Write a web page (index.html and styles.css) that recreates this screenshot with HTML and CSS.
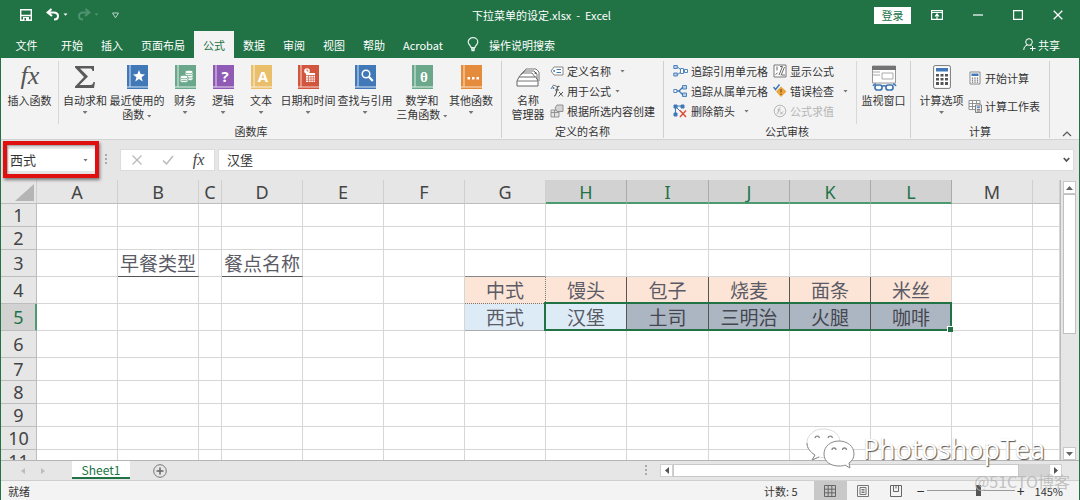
FILE: index.html
```html
<!DOCTYPE html>
<html lang="zh-CN">
<head>
<meta charset="utf-8">
<title>下拉菜单的设定.xlsx - Excel</title>
<link rel="stylesheet" href="styles.css">
</head>
<body>
<div class="window">
  <header class="titlebar">
    <div class="quick">
      <button class="tool" aria-label="保存"><svg width="12" height="12" viewBox="0 0 12 12"><path d="M.7.7h10.6v10.6H.7zM.7 6.5h10.6" fill="none" stroke="#fff" stroke-width="1.4"/><path d="M3 8h6v3.500H3z" fill="#fff"/><path d="M4.500 9h1.500v2.500H4.500z" fill="#217346"/></svg></button>
      <button class="tool undo" aria-label="撤消"><svg width="22" height="14" viewBox="0 0 22 14"><path d="M5.500 1 1.500 4.500l4.500 3.500M2 4.500h5.500c3 0 4.500 1.500 4.500 3.500s-1.500 3.500-4 3.500" fill="none" stroke="#fff" stroke-width="2"/><path d="M17.500 5.500h4l-2 2.300z" fill="#fff"/></svg></button>
      <button class="tool redo" aria-label="恢复"><svg width="22" height="14" viewBox="0 0 22 14"><path d="M8.500 1l4 3.500L8 8M12 4.500H6.500c-3 0-4.500 1.500-4.500 3.500s1.500 3.500 4 3.500" fill="none" stroke="#4f9270" stroke-width="2"/><path d="M17.500 5.500h4l-2 2.300z" fill="#4f9270"/></svg></button>
      <button class="tool" aria-label="自定义快速访问工具栏"><svg width="7" height="7" viewBox="0 0 7 7"><path d="M.5 1h6L3.500 5.800z" fill="none" stroke="#b9d5c6"/></svg></button>
    </div>
    <h1 class="doc-title">下拉菜单的设定.xlsx&nbsp; -&nbsp; Excel</h1>
    <div class="win-controls">
      <button class="login">登录</button>
      <button class="tool" aria-label="功能区显示选项"><svg width="12" height="10" viewBox="0 0 12 10"><path d="M.6.6h10.800v8.800H.6zM.6 2.500h10.800" fill="none" stroke="#fff" stroke-width="1.200"/><path d="M4 6.500l2-2.500 2 2.500M6 4.500V9" fill="none" stroke="#fff" stroke-width="1.200"/></svg></button>
      <button class="tool" aria-label="最小化"><svg width="10" height="10" viewBox="0 0 10 10"><path d="M0 5h10" stroke="#fff" stroke-width="1.200"/></svg></button>
      <button class="tool" aria-label="最大化"><svg width="10" height="10" viewBox="0 0 10 10"><path d="M.6.6h8.800v8.800H.6z" fill="none" stroke="#fff" stroke-width="1.200"/></svg></button>
      <button class="tool" aria-label="关闭"><svg width="10" height="10" viewBox="0 0 10 10"><path d="M.7.7l8.600 8.600M9.300.7.7 9.300" stroke="#fff" stroke-width="1.300"/></svg></button>
    </div>
  </header>

  <nav class="tabs">
    <button class="tab file">文件</button>
    <button class="tab">开始</button>
    <button class="tab">插入</button>
    <button class="tab">页面布局</button>
    <button class="tab active">公式</button>
    <button class="tab">数据</button>
    <button class="tab">审阅</button>
    <button class="tab">视图</button>
    <button class="tab">帮助</button>
    <button class="tab">Acrobat</button>
    <button class="tab tell"><svg width="12" height="15" viewBox="0 0 12 15"><path d="M4 10.500C4 8.500 1.200 7.800 1.200 5a4.800 4.300 0 0 1 9.600 0C10.800 7.800 8 8.500 8 10.500z" fill="none" stroke="#e4f0ea" stroke-width="1.200"/><path d="M4 12h4M4.500 13.700h3" stroke="#fff" stroke-width="1.300"/></svg>操作说明搜索</button>
    <button class="tab share"><svg width="13" height="13" viewBox="0 0 13 13"><circle cx="6" cy="4" r="3.300" fill="none" stroke="#fff"/><path d="M.8 12c0-3 1.500-4.500 3.700-5M7.500 7l1 1M9.500 8v5M7 10.500h5.500" fill="none" stroke="#fff"/></svg>共享</button>
  </nav>

  <div class="ribbon">
    <section class="group library">
      <div class="big-row fn-grid">
        <button class="big split"><svg class="ico" width="28" height="24" viewBox="0 0 28 24"><text x="14" y="19" class="fx-big">fx</text></svg><span>插入函数</span></button>
        <button class="big"><svg class="ico" width="24" height="24" viewBox="0 0 24 24"><path d="M2 1h19v5h-1.500C19 4 18.500 3.500 16.500 3.500H7l8 8-8.500 8.500H17c2.500 0 3-1 3.500-3H22L21 23H2v-1.500l9-9.500L2 2.500z" fill="#5a5a5a"/></svg><span>自动求和</span><i class="caret"></i></button>
        <button class="big"><svg class="ico" width="22" height="24" viewBox="0 0 22 24"><path d="M1 0h21v24H1z" fill="#4179b8"/><path d="M4 0v22M1 22h21" stroke="#d5e3f2" stroke-width="1"/><path d="M13 5l1.600 4.100 4.400.3-3.400 2.800 1.100 4.300L13 14.100l-3.700 2.400 1.100-4.300L7 9.400l4.400-.3z" fill="#fff"/></svg><span>最近使用的<br>函数 <i class="caret inline"></i></span></button>
        <button class="big"><svg class="ico" width="22" height="24" viewBox="0 0 22 24"><path d="M1 0h21v24H1z" fill="#6ba88b"/><path d="M4 0v22M1 22h21" stroke="#e0eee7"/><g fill="#fff" stroke="#6ba88b" stroke-width=".8"><path d="M11 7v7c0 2 8 2 8 0V7z"/><ellipse cx="15" cy="7" rx="4" ry="1.800"/><path d="M11 9.500c1 1.500 7 1.500 8 0M11 12c1 1.500 7 1.500 8 0" fill="none"/><path d="M6 12v4c0 2 8 2 8 0v-4z"/><ellipse cx="10" cy="12" rx="4" ry="1.800"/><path d="M6 14.500c1 1.500 7 1.500 8 0" fill="none"/></g></svg><span>财务</span><i class="caret"></i></button>
        <button class="big"><svg class="ico" width="22" height="24" viewBox="0 0 22 24"><path d="M1 0h21v24H1z" fill="#8f5bb5"/><path d="M4 0v22M1 22h21" stroke="#e6dbef"/><text x="13" y="17" class="book-text">?</text></svg><span>逻辑</span><i class="caret"></i></button>
        <button class="big"><svg class="ico" width="22" height="24" viewBox="0 0 22 24"><path d="M1 0h21v24H1z" fill="#eabf6c"/><path d="M4 0v22M1 22h21" stroke="#fbf1dd"/><text x="13" y="17" class="book-text">A</text></svg><span>文本</span><i class="caret"></i></button>
        <button class="big"><svg class="ico" width="22" height="24" viewBox="0 0 22 24"><path d="M1 0h21v24H1z" fill="#d2553d"/><path d="M4 0v22M1 22h21" stroke="#f5d8d2"/><path d="M9 8h9v9H9z" fill="#fff"/><path d="M9 10.500h9M9 13h9M9 15.200h9M11.500 10v7M14 10v7M16.300 10v7" stroke="#d2553d" stroke-width=".7"/><circle cx="10" cy="6" r="2.800" fill="#fff"/><path d="M10 4.200V6h1.500" fill="none" stroke="#d2553d" stroke-width=".8"/></svg><span>日期和时间</span><i class="caret"></i></button>
        <button class="big"><svg class="ico" width="22" height="24" viewBox="0 0 22 24"><path d="M1 0h21v24H1z" fill="#4179b8"/><path d="M4 0v22M1 22h21" stroke="#d5e3f2"/><circle cx="12" cy="9" r="3.800" fill="none" stroke="#fff" stroke-width="1.500"/><path d="M14.800 11.800l4 4.200" stroke="#fff" stroke-width="2.200"/></svg><span>查找与引用</span><i class="caret"></i></button>
        <button class="big"><svg class="ico" width="22" height="24" viewBox="0 0 22 24"><path d="M1 0h21v24H1z" fill="#6ba88b"/><path d="M4 0v22M1 22h21" stroke="#e0eee7"/><text x="13" y="17" class="book-text serif">θ</text></svg><span>数学和<br>三角函数 <i class="caret inline"></i></span></button>
        <button class="big"><svg class="ico" width="22" height="24" viewBox="0 0 22 24"><path d="M1 0h21v24H1z" fill="#e58b3c"/><path d="M4 0v22M1 22h21" stroke="#fae3cf"/><path d="M7.500 12h2.500v2.500H7.500zM12 12h2.500v2.500H12zM16.500 12H19v2.500h-2.500z" fill="#fff"/></svg><span>其他函数</span><i class="caret"></i></button>
      </div>
      <h2 class="group-name">函数库</h2>
    </section>

    <section class="group names">
      <div class="big-row">
        <button class="big manager"><svg class="ico" width="26" height="24" viewBox="0 0 26 24"><path d="M8 8l3-4h10l3 3v9M6 10l3-4h10l3 3v8M4 12l3-4h10l3 4" fill="#fff" stroke="#666" stroke-width=".9"/><path d="M4 12h17l2 4v5H2v-5z" fill="#fff" stroke="#666"/><path d="M2 16h21" stroke="#777"/><circle cx="20.500" cy="8" r="1" fill="#555"/></svg><span>名称<br>管理器</span></button>
        <div class="small-col">
          <button class="small"><svg width="14" height="14" viewBox="0 0 14 14"><path d="M1 7l3-4h9v8H4z" fill="#fff" stroke="#7a7a7a" stroke-width=".9"/><circle cx="4.200" cy="7" r="1" fill="#4179b8"/><path d="M6.500 5.500H11M6.500 8.500H11" stroke="#4179b8" stroke-width="1.100"/></svg>定义名称<i class="caret far"></i></button>
          <button class="small"><svg width="14" height="14" viewBox="0 0 14 14"><path d="M1 5l2.500-4 4.500 2" fill="#fff" stroke="#777"/><circle cx="3.500" cy="4" r="1" fill="#4179b8"/><path d="M9.500 2.500c-2-.8-2.200 1-2.600 3.500S6.200 12 4 12M5 6h4" fill="none" stroke="#555" stroke-width="1.200"/><path d="M9 8l4 4.500M13 8l-4.500 4.500" stroke="#555"/></svg>用于公式<i class="caret near"></i></button>
          <button class="small"><svg width="14" height="14" viewBox="0 0 14 14"><path d="M1 6h8v7H1zM1 8.500h8M4.500 6v7" fill="#e3e3e3" stroke="#8b8b8b" stroke-width=".9"/><path d="M5 4l2-3h6v6.500H7z" fill="#d4d4d4" stroke="#888" stroke-width=".9"/></svg>根据所选内容创建</button>
        </div>
      </div>
      <h2 class="group-name">定义的名称</h2>
    </section>

    <section class="group audit">
      <div class="big-row">
        <div class="small-col trace">
          <button class="small"><svg width="15" height="14" viewBox="0 0 15 14"><path d="M.8 1.500h3.500v3H.8zM.8 9h3.500v3H.8z" fill="#b9cfe8" stroke="#4179b8" stroke-width=".9"/><path d="M4.500 3l3.500 3M4.500 10.500L8 8" stroke="#4179b8"/><path d="M7.500 4.500h3v5h-3zM11.500 5.500h3v3h-3z" fill="#fff" stroke="#4179b8" stroke-width=".9"/></svg>追踪引用单元格</button>
          <button class="small"><svg width="15" height="14" viewBox="0 0 15 14"><path d="M.8 5.500h3v3h-3z" fill="#fff" stroke="#4179b8" stroke-width=".9"/><path d="M9.500 1.500h4v3.500h-4zM9.500 9h4v3.500h-4z" fill="#b9cfe8" stroke="#4179b8" stroke-width=".9"/><path d="M4 7h2M6 7l4-4M6 7l4 4" stroke="#4179b8" stroke-width="1.300"/></svg>追踪从属单元格</button>
          <button class="small"><svg width="15" height="14" viewBox="0 0 15 14"><path d="M1 1h3v3H1zM8 1h3v3H8zM1 9h3v3H1zM3 2h6M2.500 3v7M3 3l5 5" fill="#4179b8" stroke="#4179b8"/><path d="M7 6.500l6 6.500M13 6.500L7 13" stroke="#dc4f36" stroke-width="1.500"/></svg>删除箭头<i class="caret far"></i></button>
        </div>
        <div class="small-col checks">
          <button class="small"><svg width="14" height="14" viewBox="0 0 14 14"><path d="M1 1h12v12H1z" fill="#fff" stroke="#777"/><path d="M4 2.500v4M2.500 10.500l2-1.500M7 2.500h2.500L6 11M11.500 3L8 11.500M9 11h3" fill="none" stroke="#555" stroke-width=".9"/></svg>显示公式</button>
          <button class="small"><svg width="14" height="14" viewBox="0 0 14 14"><path d="M8 2.500l5.500 5L8 13 3 7.500z" fill="#eaa540"/><path d="M8 5v3.500M8 9.800V11" stroke="#7a5418" stroke-width="1.200"/><path d="M.5 3l2 2.500 4-5" fill="none" stroke="#4179b8" stroke-width="1.500"/></svg>错误检查<i class="caret far"></i></button>
          <button class="small" disabled><svg width="14" height="14" viewBox="0 0 14 14"><circle cx="7" cy="7" r="5.800" fill="none" stroke="#b5b5b5"/><path d="M7.500 3.500c-1.500 0-1.500 2-2 3.500s-.5 3-2 3M4.500 6h3M7 7.500l3 3M10 7.500l-3 3" fill="none" stroke="#aaa" stroke-width=".9"/></svg>公式求值</button>
        </div>
        <button class="big watch"><svg class="ico" width="26" height="26" viewBox="0 0 26 26"><path d="M1.500 1h23v17h-23z" fill="#fff" stroke="#999"/><path d="M1 1h24v4H1z" fill="#737373"/><path d="M2 7h7M2 10h7M11 8h11v6H11z" fill="none" stroke="#aaa"/><path d="M2 21c1-2 2-2 3-2M25 21c-1-2-2-2-3-2" fill="none" stroke="#3f76b4" stroke-width="1.500"/><rect x="4" y="20" width="7" height="5" rx="2.300" fill="#fff" stroke="#3f76b4" stroke-width="1.700"/><rect x="15" y="20" width="7" height="5" rx="2.300" fill="#fff" stroke="#3f76b4" stroke-width="1.700"/><path d="M11 21.500c1-1 3-1 4 0" fill="none" stroke="#3f76b4" stroke-width="1.500"/></svg><span>监视窗口</span></button>
      </div>
      <h2 class="group-name">公式审核</h2>
    </section>

    <section class="group calc">
      <div class="big-row">
        <button class="big options"><svg class="ico" width="18" height="24" viewBox="0 0 18 24"><rect x=".6" y=".6" width="16.800" height="22.800" rx="1.500" fill="#fff" stroke="#777"/><path d="M3 3h12v3.500H3z" fill="#4179b8"/><path d="M3 9h3v2.500H3zM7.500 9h3v2.500h-3zM12 9h3v2.500h-3zM3 13h3v2.500H3zM7.500 13h3v2.500h-3zM12 13h3v2.500h-3zM3 17h3v3H3zM7.500 17h3v3h-3zM12 17h3v3h-3z" fill="#555"/></svg><span>计算选项</span><i class="caret"></i></button>
        <div class="small-col run">
          <button class="small"><svg width="14" height="14" viewBox="0 0 14 14"><path d="M2 1h10v12H2z" fill="#fff" stroke="#888"/><path d="M3.500 2.500h7V5h-7z" fill="#4179b8"/><path d="M4.500 6.500v5.500M7 6.500v5.500M9.500 6.500v5.500" stroke="#666" stroke-width="1.300" stroke-dasharray="1.300 .7"/></svg>开始计算</button>
          <button class="small"><svg width="14" height="14" viewBox="0 0 14 14"><path d="M1 1.500h11v9H1zM1 4.500h11M1 7.500h6M4.500 1.500v9M8.500 1.500v3" fill="#fff" stroke="#888" stroke-width=".9"/><path d="M7.500 6h6v7.500h-6z" fill="#e4e4e4" stroke="#777" stroke-width=".9"/><path d="M9 7.500h3v1.300H9z" fill="#4179b8"/><path d="M9 10.500h3M9 12h3" stroke="#666" stroke-width=".8"/></svg>计算工作表</button>
        </div>
      </div>
      <h2 class="group-name">计算</h2>
    </section>
    <button class="collapse" aria-label="折叠功能区"><svg width="10" height="6" viewBox="0 0 10 6"><path d="M1 5l4-4 4 4" fill="none" stroke="#555" stroke-width="1.200"/></svg></button>
  </div>

  <div class="formula-bar">
    <div class="name-box"><input aria-label="名称框" value="西式"><button aria-label="名称列表"><i class="caret"></i></button></div>
    <svg class="grip" width="3" height="12" viewBox="0 0 3 12"><path d="M0 0h2v2H0zM0 4h2v2H0zM0 8h2v2H0z" fill="#aaa"/></svg>
    <div class="edit-tools">
      <button aria-label="取消"><svg width="12" height="12" viewBox="0 0 12 12"><path d="M1.500 1.500l9 9M10.500 1.500l-9 9" stroke="#b9b9b9" stroke-width="1.300"/></svg></button>
      <button aria-label="输入"><svg width="12" height="12" viewBox="0 0 12 12"><path d="M1 6.500L4.500 10 11 2" fill="none" stroke="#b9b9b9" stroke-width="1.500"/></svg></button>
      <button aria-label="插入函数" class="fx">fx</button>
    </div>
    <div class="formula"><input aria-label="编辑栏" value="汉堡"><button aria-label="展开编辑栏"><svg width="7" height="6" viewBox="0 0 7 6"><path d="M.8 1l2.700 3L6.200 1" fill="none" stroke="#555" stroke-width="1.800"/></svg></button></div>
  </div>

  <main class="sheet">
    <div class="grid">
      <table>
        <colgroup><col class="c-head"><col class="c"><col class="c"><col class="c-thin"><col class="c"><col class="c"><col class="c"><col class="c"><col class="c"><col class="c-wide"><col class="c"><col class="c"><col class="c"><col class="c"><col></colgroup>
        <thead><tr><th class="corner"><svg width="19" height="17" viewBox="0 0 19 17"><path d="M19 0v17H0z" fill="#b5b5b5"/></svg></th><th>A</th><th>B</th><th>C</th><th>D</th><th>E</th><th>F</th><th>G</th><th class="on">H</th><th class="on">I</th><th class="on">J</th><th class="on">K</th><th class="on">L</th><th>M</th><th></th></tr></thead>
        <tbody>
          <tr><th>1</th><td></td><td></td><td></td><td></td><td></td><td></td><td></td><td></td><td></td><td></td><td></td><td></td><td></td><td></td></tr>
          <tr><th>2</th><td></td><td></td><td></td><td></td><td></td><td></td><td></td><td></td><td></td><td></td><td></td><td></td><td></td><td></td></tr>
          <tr class="tall"><th>3</th><td></td><td class="ruled">早餐类型</td><td></td><td class="ruled">餐点名称</td><td></td><td></td><td class="pre"></td><td></td><td></td><td></td><td></td><td></td><td></td><td></td></tr>
          <tr class="tall"><th>4</th><td></td><td></td><td></td><td></td><td></td><td></td><td class="peach dotted">中式</td><td class="peach bar">馒头</td><td class="peach bar">包子</td><td class="peach bar">烧麦</td><td class="peach bar">面条</td><td class="peach">米丝</td><td></td><td></td></tr>
          <tr class="tall"><th class="on">5</th><td></td><td></td><td></td><td></td><td></td><td></td><td class="blue">西式</td><td class="blue bar anchor">汉堡<span class="selection"></span></td><td class="picked bar">土司</td><td class="picked bar">三明治</td><td class="picked bar">火腿</td><td class="picked">咖啡</td><td></td><td></td></tr>
          <tr class="tall"><th>6</th><td></td><td></td><td></td><td></td><td></td><td></td><td></td><td></td><td></td><td></td><td></td><td></td><td></td><td></td></tr>
          <tr><th>7</th><td></td><td></td><td></td><td></td><td></td><td></td><td></td><td></td><td></td><td></td><td></td><td></td><td></td><td></td></tr>
          <tr><th>8</th><td></td><td></td><td></td><td></td><td></td><td></td><td></td><td></td><td></td><td></td><td></td><td></td><td></td><td></td></tr>
          <tr><th>9</th><td></td><td></td><td></td><td></td><td></td><td></td><td></td><td></td><td></td><td></td><td></td><td></td><td></td><td></td></tr>
          <tr><th>10</th><td></td><td></td><td></td><td></td><td></td><td></td><td></td><td></td><td></td><td></td><td></td><td></td><td></td><td></td></tr>
          <tr><th>11</th><td></td><td></td><td></td><td></td><td></td><td></td><td></td><td></td><td></td><td></td><td></td><td></td><td></td><td></td></tr>
        </tbody>
      </table>
    </div>
    <div class="vscroll">
      <button aria-label="向上滚动"><svg width="7" height="4" viewBox="0 0 7 4"><path d="M0 4h7L3.500 0z" fill="#666"/></svg></button>
      <div class="v-thumb"></div>
      <button class="down" aria-label="向下滚动"><svg width="7" height="4" viewBox="0 0 7 4"><path d="M0 0h7L3.500 4z" fill="#666"/></svg></button>
    </div>
  </main>

  <div class="sheet-bar">
    <div class="sheet-nav"><svg width="4" height="6" viewBox="0 0 4 6"><path d="M4 0v6L0 3z" fill="#bdbdbd"/></svg><svg width="4" height="6" viewBox="0 0 4 6"><path d="M0 0v6l4-3z" fill="#bdbdbd"/></svg></div>
    <button class="sheet-tab">Sheet1</button>
    <button class="add-sheet" aria-label="新工作表"><svg width="14" height="14" viewBox="0 0 14 14"><circle cx="7" cy="7" r="6.300" fill="none" stroke="#777"/><path d="M7 3.500v7M3.500 7h7" stroke="#666" stroke-width="1.500"/></svg></button>
    <svg class="grip bar-grip" width="3" height="12" viewBox="0 0 3 12"><path d="M0 0h2v2H0zM0 4h2v2H0zM0 8h2v2H0z" fill="#aaa"/></svg>
    <div class="hscroll">
      <button aria-label="向左滚动"><svg width="4" height="7" viewBox="0 0 4 7"><path d="M4 0v7L0 3.500z" fill="#555"/></svg></button>
      <div class="h-thumb"></div>
      <button aria-label="向右滚动"><svg width="4" height="7" viewBox="0 0 4 7"><path d="M0 0v7l4-3.500z" fill="#555"/></svg></button>
    </div>
  </div>

  <footer class="status">
    <span>就绪</span>
    <span class="count">计数: 5</span>
    <button class="view active" aria-label="普通"><svg width="12" height="12" viewBox="0 0 12 12"><path d="M.5.5h11v11H.5zM.5 4.200h11M.5 7.800h11M4.200.5v11M7.800.5v11" fill="none" stroke="#666"/></svg></button>
    <button class="view" aria-label="页面布局"><svg width="12" height="12" viewBox="0 0 12 12"><path d="M.5.5h11v11H.5zM3 2.500h6v7H3zM4.500 4.500h3M4.500 6h3M4.500 7.500h3" fill="none" stroke="#777"/></svg></button>
    <button class="view" aria-label="分页预览"><svg width="12" height="12" viewBox="0 0 12 12"><path d="M.5.5h11v11H.5zM3.500.5v6h5v-6M6 .5v3" fill="none" stroke="#666"/></svg></button>
    <button class="zoom-btn minus" aria-label="缩小">−</button>
    <input class="zoom-slider" type="range" min="0" max="100" value="60" aria-label="显示比例">
    <button class="zoom-btn" aria-label="放大">+</button>
    <span class="percent">145%</span>
  </footer>

  <div class="brand">
    <svg width="50" height="41" viewBox="0 0 50 41"><g fill="#fff" stroke="#8a8a8a" stroke-width="1"><path d="M17 1C8 1 1 7 1 15c0 5 3 9 8 12l-3 5 7-3c12 3 21-4 21-14S26 1 17 1z" stroke="#dcdcdc"/><path d="M1 15c0 5 3 9 8 12l-3 5 7-3" fill="none"/><path d="M33 13c-8 0-15 5-15 13s7 12 15 12c2 0 4 0 6-1l5 3-1-5c3-2 5-5 5-9 0-8-7-13-15-13z"/></g><g fill="none" stroke="#888" stroke-width="1.300"><path d="M9 10a2.300 2.300 0 0 1 4.500 0M22 10a2.300 2.300 0 0 1 4.500 0M26 22a2 2 0 0 1 4 0M36.500 22a2 2 0 0 1 4 0"/></g></svg>
    <span>PhotoshopTea</span>
  </div>
  <div class="credit">@51CTO博客</div>
</div>
</body>
</html>
```
FILE: styles.css
```css
* { box-sizing: border-box; }
body {
  margin: 0;
  font-family: "Noto Sans CJK SC", "Noto Sans", sans-serif;
  font-size: 11px;
  line-height: 14px;
  color: #333;
}
button, input {
  margin: 0;
  padding: 0;
  border: 0;
  background: none;
  font: inherit;
  color: inherit;
}
button { white-space: nowrap; }
svg { display: block; flex: none; }
h1, h2 { margin: 0; font-size: 11px; font-weight: 400; }

.window {
  position: relative;
  display: flex;
  flex-direction: column;
  height: 100vh;
  overflow: hidden;
  border: solid #217346;
  border-width: 0 1px;
  background: #e6e6e6;
}

/* Title bar */
.titlebar {
  display: grid;
  grid-template-columns: 1fr auto 1fr;
  align-items: center;
  height: 30px;
  padding: 0 16px 0 19px;
  background: #217346;
  color: #fff;
}
.quick { display: flex; align-items: center; gap: 9px; }
.undo { margin-left: 5px; }
.quick .tool:last-child { margin-left: 4px; }
.doc-title { font-size: 11px; }
.win-controls { display: flex; align-items: center; justify-content: flex-end; gap: 30px; }
.login {
  width: 37px;
  height: 17px;
  margin-right: -10px;
  background: #fff;
  color: #217346;
}

/* Ribbon tabs */
.tabs { display: flex; height: 28px; padding-top: 1px; background: #217346; color: #fff; }
.tab { padding: 0 9px; }
.tab.file { width: 51px; padding: 0; }
.tab.active { background: #f3f3f3; color: #217346; }
.tell { display: flex; align-items: center; gap: 10px; margin-left: 6px; }
.share { display: flex; align-items: center; gap: 2px; margin-left: auto; padding-right: 19px; }

/* Ribbon */
.ribbon {
  display: flex;
  height: 82px;
  background: #f3f3f3;
  border-bottom: 1px solid #d2d2d2;
}
.group { display: flex; flex-direction: column; border-right: 1px solid #d0d0d0; margin: 3px 0 1px; }
.group-name { text-align: center; line-height: 14px; }
.big-row { display: flex; flex: 1; }
.fn-grid { display: grid; grid-template-columns: 58px 52px 52px 44px 32px 44px 50px 64px 50px 48px; }
.library { width: 501px; }
.names { width: 162px; }
.audit { width: 247px; }
.calc { width: 139px; }
.big {
  display: flex;
  flex-direction: column;
  align-items: center;
  gap: 4px;
  padding-top: 4px;
  line-height: 14px;
}
.big.split { border-right: 1px solid #d8d8d8; }
.caret {
  display: block;
  width: 5px;
  height: 3px;
  background: #777;
  clip-path: polygon(0 0, 100% 0, 50% 100%);
}
.caret.inline { display: inline-block; vertical-align: middle; }
.small-col { display: flex; flex: none; flex-direction: column; gap: 6px; padding-top: 3px; }
.small { display: flex; align-items: center; gap: 3px; height: 14px; }
.small:disabled { color: #b5b5b5; }
.caret.far { margin-left: 6px; }
.caret.near { margin-left: 1px; }
.manager { width: 48px; padding-left: 4px; }
.trace { padding-left: 9px; width: 109px; }
.watch { flex: 1; gap: 2px; margin-left: 8px; border-left: 1px solid #d8d8d8; }
.options { width: 57px; padding-left: 4px; }
.run { gap: 14px; padding-top: 10px; }
.collapse { margin: auto 7px 2px auto; }
.fx-big { font: italic 26px "Liberation Serif", serif; fill: #555; text-anchor: middle; }
.book-text { font: bold 15px "Open Sans", sans-serif; fill: #fff; text-anchor: middle; }
.book-text.serif { font-family: "Liberation Serif", serif; }

/* Formula bar */
.formula-bar { display: flex; align-items: center; height: 40px; padding: 0 5px 0 7px; font-size: 13px; }
.name-box {
  position: relative;
  display: flex;
  width: 87px;
  height: 22px;
  background: #fff;
}
.name-box::after {
  content: "";
  position: absolute;
  inset: -8px -4px -7px -5px;
  border: 4px solid #e01010;
  box-shadow: 1px 2px 3px #777, inset 1px 1px 2px #999;
  pointer-events: none;
}
.name-box input { flex: 1; min-width: 0; padding-left: 2px; }
.name-box button { padding: 0 7px; }
.grip { margin: 0 12px 0 10px; }
.edit-tools {
  display: flex;
  align-items: center;
  justify-content: space-around;
  width: 95px;
  height: 22px;
  margin-right: 3px;
  background: #fff;
  border: 1px solid #dcdcdc;
}
.fx { font: italic 16px "Liberation Serif", serif; color: #444; }
.formula { display: flex; flex: 1; height: 22px; background: #fff; border: 1px solid #dcdcdc; }
.formula input { flex: 1; min-width: 0; padding-left: 8px; }
.formula button { padding: 0 3px; }

/* Worksheet grid */
.sheet { display: flex; flex: 1; min-height: 0; }
.grid { flex: 1; overflow: hidden; background: #fff; border-right: 1px solid #bbb; }
.grid table { width: 100%; table-layout: fixed; border-collapse: separate; border-spacing: 0; }
.c-head { width: 36px; }
.c { width: 81px; }
.c-wide { width: 82px; }
.c-thin { width: 23px; }
.grid th, .grid td {
  padding: 0;
  border: solid #d6d6d6;
  border-width: 0 1px 1px 0;
  text-align: center;
  font-weight: 400;
  white-space: nowrap;
}
.grid th {
  background: #e6e6e6;
  border-color: #bdbdbd;
  font-family: "Noto Sans", sans-serif;
  font-size: 18px;
  line-height: 22px;
  color: #444;
}
.grid td { font-size: 19px; line-height: 20px; color: #5b5b66; }
.grid tr { height: 23px; }
.grid thead tr { height: 24px; }
.grid tr.tall { height: 27px; }
.grid thead th { border-right-color: #cfcfcf; }
.grid .corner { vertical-align: bottom; padding: 0 2px 2px 14px; }
.grid thead th.on { background: #d2d2d2; color: #217346; border-right-color: #aaa; border-bottom-color: #4c9a70; box-shadow: inset 0 -1px #4c9a70; }
.grid tbody th.on { background: #d2d2d2; color: #217346; border-right-color: #4c9a70; box-shadow: inset -1px 0 #4c9a70; }
.grid .ruled { border-bottom-color: #555; }
.grid .pre { border-bottom-color: #888; }
.grid .peach { background: #fce4d6; }
.grid .dotted { border-right: 1px dotted #777; border-bottom: 1px dotted #777; }
.grid .blue { background: #ddebf7; border-bottom-color: #aaa; }
.grid .picked { background: #acb5c2; color: #44474f; }
.grid .bar { border-right-color: #555; }
.grid .anchor { position: relative; }
.selection {
  position: absolute;
  top: -2px;
  left: -2px;
  width: calc(500% + 8px);
  height: 29px;
  border: 2px solid #217346;
  pointer-events: none;
}
.selection::after {
  content: "";
  position: absolute;
  right: -3px;
  bottom: -3px;
  width: 5px;
  height: 5px;
  background: #217346;
  border: solid #fff;
  border-width: 1px 0 0 1px;
}
.vscroll { display: flex; flex-direction: column; width: 18px; padding: 1px 3px 0 2px; }
.vscroll button { display: grid; place-items: center; height: 13px; background: #fff; border: 1px solid #c8c8c8; }
.v-thumb { height: 50%; background: #fff; border: 1px solid #c0c0c0; }
.down { margin-top: auto; }

/* Sheet tabs and horizontal scroll */
.sheet-bar { display: flex; align-items: center; height: 21px; border-top: 1px solid #b5b5b5; border-bottom: 1px solid #cfcfcf; }
.sheet-nav { display: flex; gap: 16px; padding-left: 20px; width: 71px; }
.sheet-tab {
  align-self: flex-start;
  width: 58px;
  height: 18px;
  background: #fff;
  border-bottom: 2px solid #217346;
  color: #217346;
  font-size: 12px;
  line-height: 15px;
}
.add-sheet { margin-left: 23px; }
.bar-grip { margin-left: auto; }
.hscroll { display: flex; flex: 0 1 402px; height: 13px; margin-right: 17px; background: #d4d4d4; }
.hscroll button { display: grid; place-items: center; width: 13px; background: #fff; border: 1px solid #d0d0d0; }
.h-thumb { width: 346px; margin-right: auto; background: #fff; border: 1px solid #c8c8c8; }

/* Status bar */
.status { display: flex; align-items: center; height: 19px; padding: 0 16px 0 7px; background: #f3f3f3; }
.count { margin-left: auto; margin-right: 16px; }
.view { display: grid; place-items: center; width: 33px; height: 19px; }
.view.active { background: #c8c8c8; }
.zoom-btn { width: 12px; font-size: 14px; }
.minus { margin-left: 2px; }
.zoom-slider { appearance: none; width: 88px; height: 12px; }
.zoom-slider::-webkit-slider-runnable-track { height: 12px; background: linear-gradient(#999, #999) center / 100% 1px no-repeat; }
.zoom-slider::-webkit-slider-thumb { appearance: none; width: 5px; height: 11px; background: #555; }
.percent { margin-left: 8px; }

/* Watermarks over the window */
.brand {
  position: absolute;
  right: 34px;
  bottom: 31px;
  display: flex;
  align-items: center;
  gap: 7px;
  font-family: "Open Sans", sans-serif;
  font-size: 27px;
  line-height: 36px;
  color: #fff;
  text-shadow: 1px 1px 1px #555, 0 0 1px #ccc;
  pointer-events: none;
}
.credit {
  position: absolute;
  right: 9px;
  bottom: 9px;
  font-size: 16px;
  line-height: 20px;
  color: #b4b4b4cc;
  pointer-events: none;
}
```
